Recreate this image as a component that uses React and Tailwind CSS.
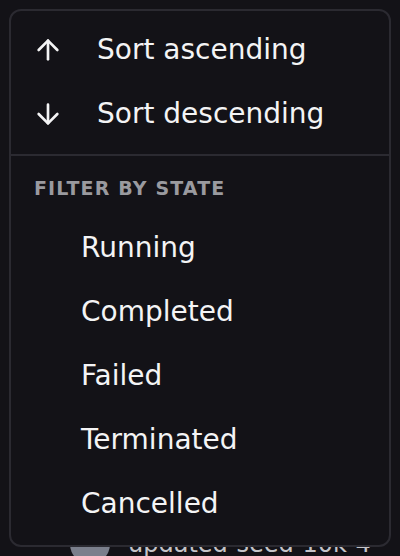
import { ArrowUp, ArrowDown } from 'lucide-react'

const states = ['Running', 'Completed', 'Failed', 'Terminated', 'Cancelled']

function SortItem({ icon: Icon, label }) {
  return (
    <div className="flex h-16 items-center pl-[21px]">
      <Icon size={32} strokeWidth={2} className="shrink-0 text-[#f4f4f5]" />
      <span className="ml-[33px] text-[28px] text-[#f4f4f5]">{label}</span>
    </div>
  )
}

export default function App() {
  return (
    <div className="relative h-[556px] w-[400px] overflow-hidden bg-[#131217] font-['DejaVu_Sans',sans-serif]">
      {/* page underneath the menu */}
      <div className="flex items-center gap-[18px] pl-[70px] pt-[524px]">
        <div className="h-10 w-10 shrink-0 rounded-full bg-[#7b7f8c]" />
        <span className="text-[24px] text-[#c4c4c8]">updated-seed-10k-4</span>
      </div>

      {/* column menu */}
      <div className="absolute left-[9px] top-[9px] w-[382px] rounded-[12px] border-2 border-[#2b2a31] bg-[#131217] pb-[9px] pt-[7px]">
        <SortItem icon={ArrowUp} label="Sort ascending" />
        <SortItem icon={ArrowDown} label="Sort descending" />

        <div className="my-[8px] h-[2px] bg-[#2b2a31]" />

        <div className="mb-4 mt-5 pl-[23px] text-[19px] font-bold uppercase leading-6 tracking-[0.06em] text-[#9a9a9f]">
          Filter by state
        </div>

        {states.map((s) => (
          <div key={s} className="flex h-16 items-center pl-[70px] text-[28px] text-[#f4f4f5]">
            {s}
          </div>
        ))}
      </div>
    </div>
  )
}
